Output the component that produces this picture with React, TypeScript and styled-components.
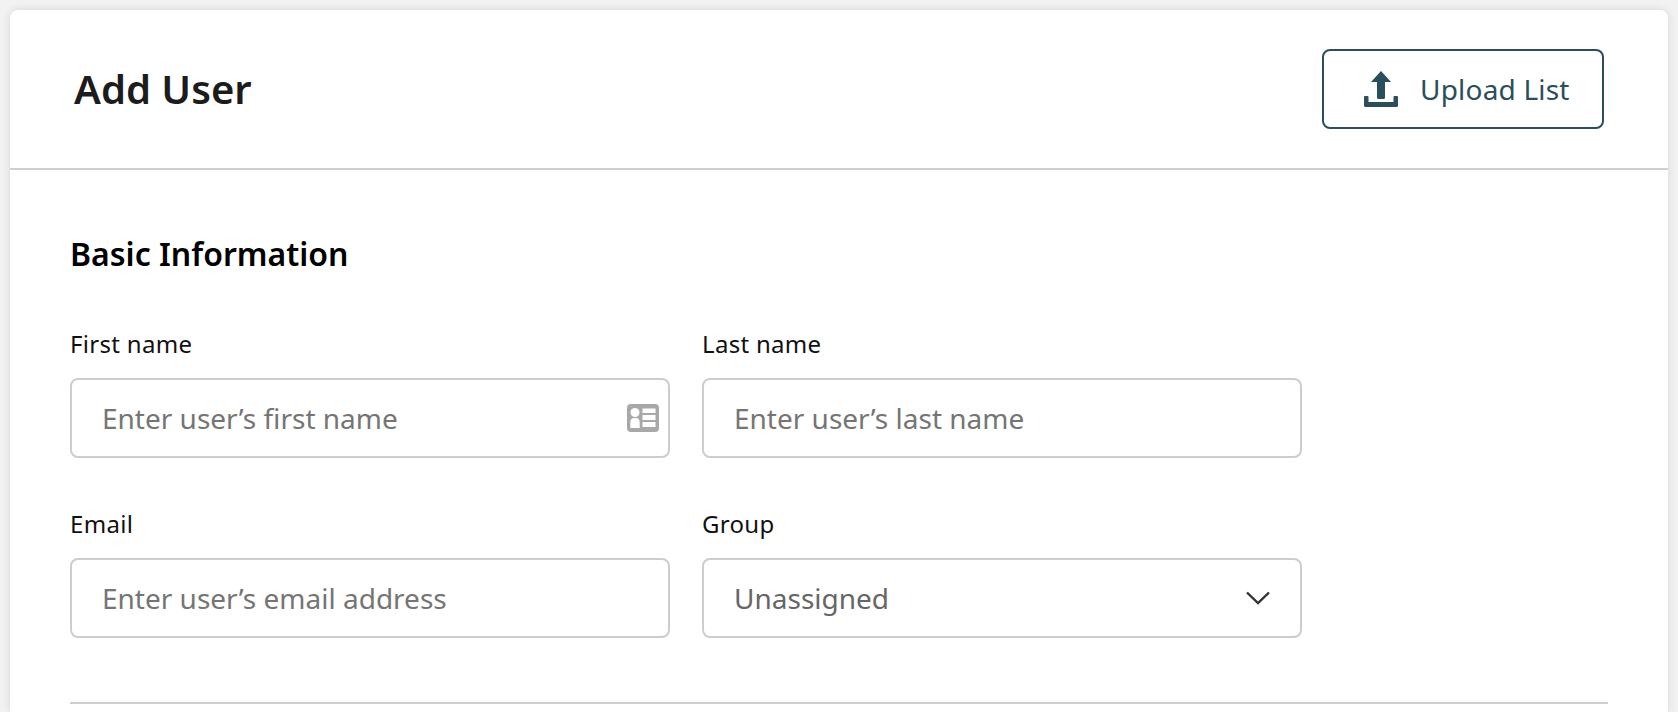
import React from 'react';
import styled, { createGlobalStyle } from 'styled-components';

const GlobalStyle = createGlobalStyle`
  html, body {
    margin: 0;
    padding: 0;
    height: 712px;
    overflow: hidden;
    background: #f2f2f2;
    font-family: "Noto Sans", "Open Sans", sans-serif;
  }
  * { box-sizing: border-box; }
`;

const Page = styled.div`
  padding: 10px 10px 0;
  height: 712px;
  overflow: hidden;
`;

const Card = styled.div`
  background: #fff;
  border-radius: 8px 8px 0 0;
  box-shadow: 0 0 8px rgba(0, 0, 0, 0.12);
  height: 702px;
`;

const Header = styled.header`
  display: flex;
  align-items: center;
  justify-content: space-between;
  height: 160px;
  padding: 0 64px 0 64px;
  border-bottom: 2px solid #cfcfcf;
`;

const Title = styled.h1`
  margin: 0;
  color: #1c1c1c;
  font-size: 40px;
  line-height: 48px;
  font-weight: 600;
`;

const UploadButton = styled.button`
  display: flex;
  align-items: center;
  gap: 22px;
  width: 282px;
  height: 80px;
  padding: 0 0 0 40px;
  background: #fff;
  border: 2px solid #2a4f5b;
  border-radius: 8px;
  color: #2a4f5b;
  font-family: inherit;
  font-size: 28px;
  letter-spacing: 0.2px;
`;

const Body = styled.div`
  padding: 62px 60px 0;
`;

const SectionTitle = styled.h2`
  margin: 0 0 52px;
  color: #000;
  font-size: 32px;
  line-height: 44px;
  font-weight: 600;
`;

const FieldGrid = styled.div`
  display: grid;
  grid-template-columns: 600px 600px;
  column-gap: 32px;
  row-gap: 50px;
`;

const Field = styled.label`
  display: block;
`;

const Label = styled.div`
  margin-bottom: 18px;
  color: #111;
  font-size: 24px;
  line-height: 32px;
  letter-spacing: 0.3px;
`;

const InputBox = styled.div`
  position: relative;
  height: 80px;
`;

const TextInput = styled.input`
  width: 100%;
  height: 100%;
  padding: 0 30px;
  border: 2px solid #cdcdcd;
  border-radius: 8px;
  outline: none;
  font-family: inherit;
  font-size: 28px;

  &::placeholder {
    color: #757575;
    opacity: 1;
  }
`;

const InputIcon = styled.svg`
  position: absolute;
  top: 26px;
  right: 11px;
`;

const SelectBox = styled.div`
  display: flex;
  align-items: center;
  justify-content: space-between;
  height: 80px;
  padding: 0 30px;
  border: 2px solid #cdcdcd;
  border-radius: 8px;
  color: #666;
  font-size: 28px;
`;

const Divider = styled.hr`
  margin: 64px 0 0;
  border: none;
  border-top: 2px solid #cfcfcf;
`;

const UploadIcon = () => (
  <svg width="34" height="36" viewBox="0 0 34 36" fill="#2a4f5b">
    <path d="M17 0 L27 11 L21 11 L21 26.5 Q21 28 19.5 28 L14.5 28 Q13 28 13 26.5 L13 11 L7 11 Z" />
    <path d="M0 26 Q0 25 1 25 L3.5 25 Q4.5 25 4.5 26 L4.5 31 L29.5 31 L29.5 26 Q29.5 25 30.5 25 L33 25 Q34 25 34 26 L34 34.5 Q34 36 32.5 36 L1.5 36 Q0 36 0 34.5 Z" />
  </svg>
);

const IdCardIcon = () => (
  <InputIcon width="32" height="28" viewBox="0 0 32 28">
    <rect x="0" y="0" width="32" height="28" rx="4" fill="#a8a8a8" />
    <circle cx="8" cy="8.5" r="4.5" fill="#fff" />
    <path d="M3.3 24 L3.3 18.5 Q3.3 14 7 14 L9 14 Q12.7 14 12.7 18.5 L12.7 24 Z" fill="#fff" />
    <rect x="15.5" y="4.5" width="13" height="4.5" fill="#fff" />
    <rect x="15.5" y="11" width="13" height="5" fill="#fff" />
    <rect x="15.5" y="18" width="13" height="5" fill="#fff" />
  </InputIcon>
);

const ChevronIcon = () => (
  <svg width="24" height="14" viewBox="0 0 24 14" fill="none" stroke="#333" strokeWidth="2.4">
    <path d="M1 1.5 L12 12 L23 1.5" />
  </svg>
);

export default function App() {
  return (
    <>
      <GlobalStyle />
      <Page>
        <Card>
          <Header>
            <Title>Add User</Title>
            <UploadButton>
              <UploadIcon />
              Upload List
            </UploadButton>
          </Header>
          <Body>
            <SectionTitle>Basic Information</SectionTitle>
            <FieldGrid>
              <Field>
                <Label>First name</Label>
                <InputBox>
                  <TextInput placeholder="Enter user’s first name" />
                  <IdCardIcon />
                </InputBox>
              </Field>
              <Field>
                <Label>Last name</Label>
                <InputBox>
                  <TextInput placeholder="Enter user’s last name" />
                </InputBox>
              </Field>
              <Field>
                <Label>Email</Label>
                <InputBox>
                  <TextInput placeholder="Enter user’s email address" />
                </InputBox>
              </Field>
              <Field>
                <Label>Group</Label>
                <SelectBox>
                  Unassigned
                  <ChevronIcon />
                </SelectBox>
              </Field>
            </FieldGrid>
            <Divider />
          </Body>
        </Card>
      </Page>
    </>
  );
}
